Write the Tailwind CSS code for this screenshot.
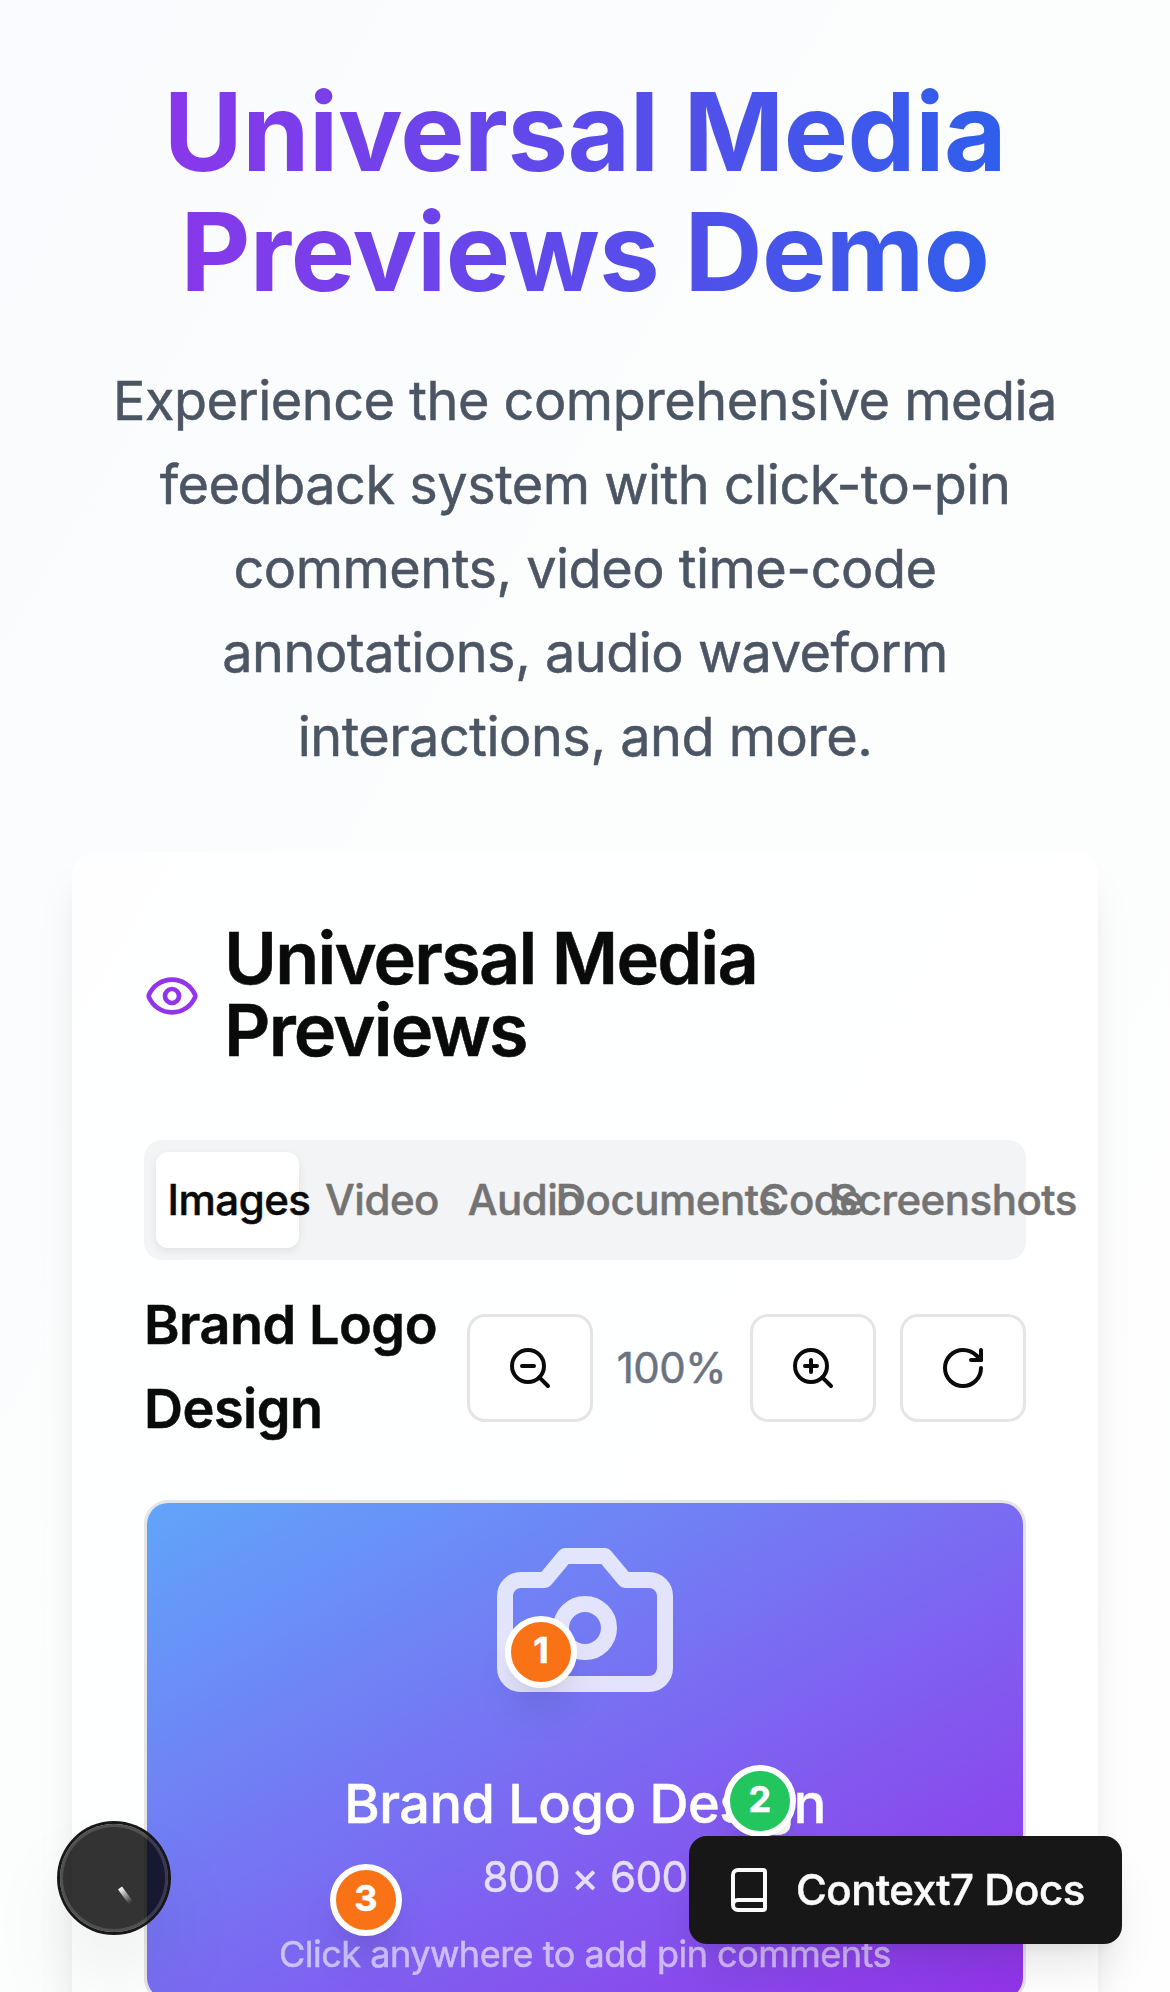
<!DOCTYPE html>
<html lang="en">
<head>
<meta charset="utf-8">
<title>Universal Media Previews Demo</title>
<script src="https://cdn.jsdelivr.net/npm/@tailwindcss/browser@4"></script>
</head>
<body class="h-[1992px] overflow-hidden bg-white font-['Inter',sans-serif] tracking-[-0.49px] text-[#0a0a0a] antialiased [-webkit-text-stroke:0.5px]">
<main class="h-[1992px] overflow-hidden bg-linear-to-br/srgb from-[#f9fbfe] via-[#fcfdfd] via-40% to-[#fefefe] px-[72px] pt-[72px]">
  <header class="mb-[73px] text-center">
    <h1 class="mb-[47px] bg-linear-to-r/srgb from-[#9333ea] to-[#2563eb] bg-clip-text text-[108px] leading-[120px] font-bold text-transparent [-webkit-text-stroke:0]">Universal Media<br>Previews Demo</h1>
    <p class="text-[54px] leading-[84px] text-[#4b5563]">Experience the comprehensive media<br>feedback system with click-to-pin<br>comments, video time-code<br>annotations, audio waveform<br>interactions, and more.</p>
  </header>

  <section class="h-[1500px] rounded-[24px] bg-white/80 p-[72px] shadow-[0_30px_45px_-9px_rgb(0_0_0/0.1),0_12px_18px_-12px_rgb(0_0_0/0.1)]">
    <div class="mb-[72px] flex items-center gap-6">
      <svg class="size-[56px] shrink-0 text-[#9333ea]" viewBox="0 0 24 24" fill="none" stroke="currentColor" stroke-width="2" stroke-linecap="round" stroke-linejoin="round"><path d="M2.062 12.348a1 1 0 0 1 0-.696 10.75 10.75 0 0 1 19.876 0 1 1 0 0 1 0 .696 10.75 10.75 0 0 1-19.876 0"/><circle cx="12" cy="12" r="3"/></svg>
      <h2 class="-mt-0.5 mb-0.5 text-[72px] leading-[72px] font-semibold tracking-tight">Universal Media<br>Previews</h2>
    </div>

    <div class="grid h-[120px] grid-cols-6 rounded-[18px] bg-[#f3f4f6] p-3 text-[42px] leading-[60px] font-medium whitespace-nowrap text-[#737373]">
      <div class="flex min-w-0 items-center justify-center rounded-[12px] bg-white text-[#0a0a0a] shadow-[0_3px_9px_rgb(0_0_0/0.08)]"><span class="ml-[23px]">Images</span></div>
      <div class="flex min-w-0 items-center justify-center"><span class="ml-[23px]">Video</span></div>
      <div class="flex min-w-0 items-center justify-center"><span class="ml-[23px]">Audio</span></div>
      <div class="flex min-w-0 items-center justify-center"><span class="ml-[23px]">Documents</span></div>
      <div class="flex min-w-0 items-center justify-center"><span class="ml-[23px]">Code</span></div>
      <div class="flex min-w-0 items-center justify-center"><span class="ml-[23px]">Screenshots</span></div>
    </div>

    <div class="mt-6 mb-12 flex items-center justify-between">
      <h3 class="-mt-px mb-px text-[54px] leading-[84px] font-semibold">Brand Logo<br>Design</h3>
      <div class="flex items-center gap-6">
        <button class="flex h-[108px] w-[126px] items-center justify-center rounded-[18px] border-3 border-[#e5e5e5] bg-white">
          <svg class="size-12" viewBox="0 0 24 24" fill="none" stroke="currentColor" stroke-width="2" stroke-linecap="round" stroke-linejoin="round"><circle cx="11" cy="11" r="8"/><path d="m21 21-4.35-4.35M8 11h6"/></svg>
        </button>
        <span class="text-[42px] leading-[60px] text-[#6b7280]">100%</span>
        <button class="flex h-[108px] w-[126px] items-center justify-center rounded-[18px] border-3 border-[#e5e5e5] bg-white">
          <svg class="size-12" viewBox="0 0 24 24" fill="none" stroke="currentColor" stroke-width="2" stroke-linecap="round" stroke-linejoin="round"><circle cx="11" cy="11" r="8"/><path d="m21 21-4.35-4.35M11 8v6M8 11h6"/></svg>
        </button>
        <button class="flex h-[108px] w-[126px] items-center justify-center rounded-[18px] border-3 border-[#e5e5e5] bg-white">
          <svg class="size-12" viewBox="0 0 24 24" fill="none" stroke="currentColor" stroke-width="2" stroke-linecap="round" stroke-linejoin="round"><path d="M21 12a9 9 0 1 1-9-9c2.52 0 4.93 1 6.74 2.74L21 8"/><path d="M21 3v5h-5"/></svg>
        </button>
      </div>
    </div>

    <div class="h-[502px] overflow-hidden rounded-[24px] border-3 border-[#e5e5e5]">
      <div class="relative flex h-full flex-col items-center bg-linear-to-br/srgb from-[#60a5fa] to-[#9333ea] pt-[21px] text-white">
        <svg class="mb-[47px] size-48 shrink-0 opacity-80" viewBox="0 0 24 24" fill="none" stroke="currentColor" stroke-width="2" stroke-linecap="round" stroke-linejoin="round"><path d="M14.5 4h-5L7 7H4a2 2 0 0 0-2 2v9a2 2 0 0 0 2 2h16a2 2 0 0 0 2-2V9a2 2 0 0 0-2-2h-3l-2.5-3z"/><circle cx="12" cy="13" r="3"/></svg>
        <p class="-mt-px text-[54px] leading-[84px] font-medium">Brand Logo Design</p>
        <p class="mt-px text-[42px] leading-[60px] opacity-80">800 × 600</p>
        <p class="mt-[23px] text-[36px] leading-[48px] opacity-60">Click anywhere to add pin comments</p>
        <span class="absolute top-[30%] left-[45%] flex size-[72px] -translate-1/2 items-center justify-center rounded-full border-6 border-white bg-[#f97316] pr-px pb-[3px] text-[36px] leading-[48px] font-bold shadow-[0_30px_45px_-9px_rgb(0_0_0/0.1),0_12px_18px_-12px_rgb(0_0_0/0.1)]">1</span>
        <span class="absolute top-[60%] left-[70%] flex size-[72px] -translate-1/2 items-center justify-center rounded-full border-6 border-white bg-[#22c55e] pr-px pb-[3px] text-[36px] leading-[48px] font-bold shadow-[0_30px_45px_-9px_rgb(0_0_0/0.1),0_12px_18px_-12px_rgb(0_0_0/0.1)]">2</span>
        <span class="absolute top-[80%] left-[25%] flex size-[72px] -translate-1/2 items-center justify-center rounded-full border-6 border-white bg-[#f97316] pr-px pb-[3px] text-[36px] leading-[48px] font-bold shadow-[0_30px_45px_-9px_rgb(0_0_0/0.1),0_12px_18px_-12px_rgb(0_0_0/0.1)]">3</span>
      </div>
    </div>
  </section>
</main>

<!-- floating tool badge -->
<div class="fixed top-[1824px] left-[60px] size-[108px] rounded-full bg-black/80 shadow-[0_0_0_3px_#171717,inset_0_0_0_3px_rgb(255_255_255/0.14),0_48px_96px_-24px_rgb(0_0_0/0.24)]">
  <svg class="size-full" viewBox="0 0 108 108" fill="none">
    <defs><linearGradient id="slash" x1="60" y1="64" x2="71" y2="79" gradientUnits="userSpaceOnUse"><stop stop-color="#fff"/><stop offset="1" stop-color="#fff" stop-opacity="0"/></linearGradient></defs>
    <path d="M60 64 71 79" stroke="url(#slash)" stroke-width="5"/>
  </svg>
</div>

<!-- docs launcher -->
<button class="fixed top-[1836px] right-12 flex h-[108px] w-[433px] items-center rounded-[18px] bg-[#171717] px-9 text-[42px] leading-[60px] font-medium whitespace-nowrap text-[#fafafa] shadow-[0_30px_45px_-9px_rgb(0_0_0/0.1),0_12px_18px_-12px_rgb(0_0_0/0.1)]">
  <svg class="mr-[23px] size-12 shrink-0" viewBox="0 0 24 24" fill="none" stroke="currentColor" stroke-width="2" stroke-linecap="round" stroke-linejoin="round"><path d="M4 19.5v-15A2.5 2.5 0 0 1 6.500 2H19a1 1 0 0 1 1 1v18a1 1 0 0 1-1 1H6.500a1 1 0 0 1 0-5H20"/></svg>
  Context7 Docs
</button>
</body>
</html>
